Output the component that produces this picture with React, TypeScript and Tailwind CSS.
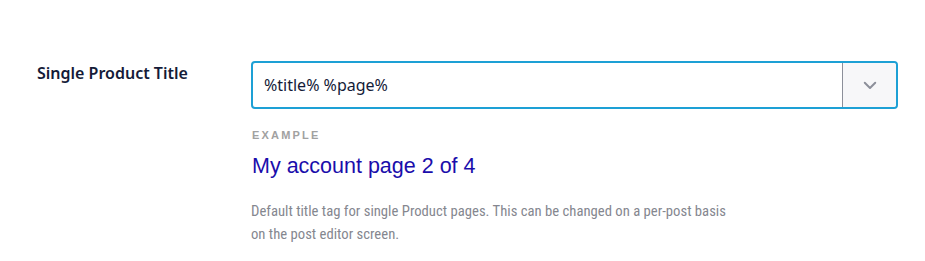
export default function App() {
    return (
        <div className="w-[925px] h-[261px] bg-white font-['Noto_Sans',sans-serif]">
            <div className="flex pt-[61px] pl-[37px]">
                <div className="w-[214px] text-[16px] leading-[24px] font-semibold text-[#141b38]">
                    Single Product Title
                </div>
                <div className="w-[647px]">
                    <div className="flex h-[48px] rounded-[4px] border-2 border-[#1da0d5] bg-white">
                        <div className="flex flex-1 items-center pl-[11px] text-[16px] text-[#141b38]">
                            %title% %page%
                        </div>
                        <div className="flex w-[54px] items-center justify-center rounded-r-[3px] border-l border-[#8c8f9a] bg-[#f7f7f9]">
                            <svg width="18" height="18" viewBox="0 0 24 24" fill="none" stroke="#8c8f9a" strokeWidth="2.6" strokeLinecap="round" strokeLinejoin="round">
                                <path d="M5 9l7 7 7-7" />
                            </svg>
                        </div>
                    </div>
                    <div className="mt-[18px] pl-[1px] text-[11px] font-bold tracking-[2.2px] text-[#a1a1a1] font-['Liberation_Sans',sans-serif]">
                        EXAMPLE
                    </div>
                    <div className="mt-[8px] pl-[1px] text-[21.5px] leading-[28px] text-[#1a0dab] font-['Liberation_Sans',sans-serif]">
                        My account page 2 of 4
                    </div>
                    <p className="mt-[20px] w-[640px] text-[14.7px] leading-[23px] text-[#85878f] font-['Roboto_Condensed','Lato',sans-serif]">
                        Default title tag for single Product pages. This can be changed on a per-post basis<br />
                        on the post editor screen.
                    </p>
                </div>
            </div>
        </div>
    );
}
